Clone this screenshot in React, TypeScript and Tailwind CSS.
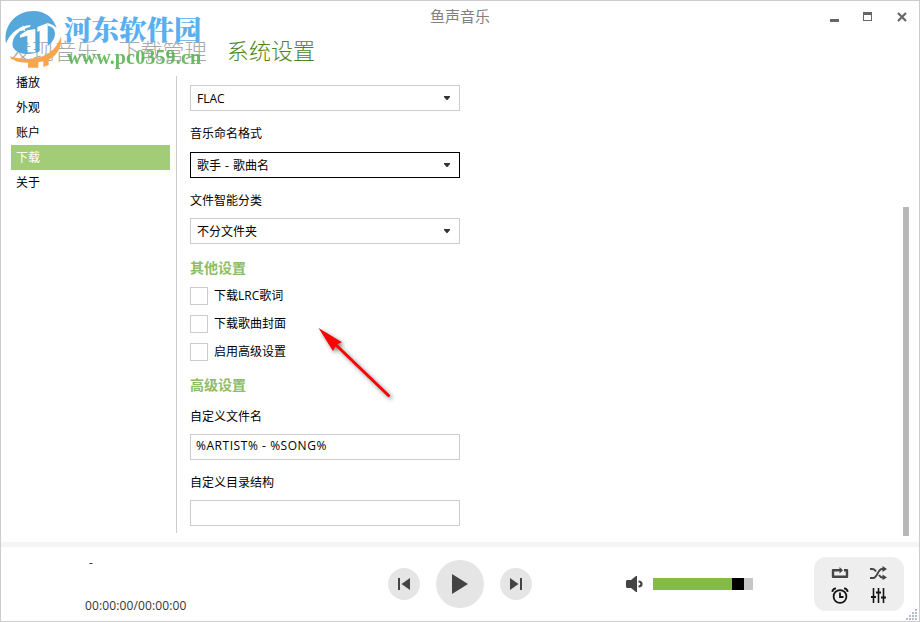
import React, { useState } from "react";

const TABS = ["发现音乐", "下载管理", "系统设置"];
const SECTIONS = ["播放", "外观", "账户", "下载", "关于"];

function SelectBox({ value, active }: { value: string; active?: boolean }) {
  return (
    <button
      className={`flex h-[26px] w-[270px] shrink-0 items-center justify-between border pl-1.5 pr-2 text-left ${
        active ? "border-black" : "border-[#cccccc]"
      }`}
    >
      <span className="pt-px leading-6 [word-spacing:1px]">{value}</span>
      <svg width="8" height="5" viewBox="0 0 8 5" fill="#333">
        <path d="M1 0h6v1L4.500 4h-1L1 1z" />
      </svg>
    </button>
  );
}

function FieldLabel({ children }: { children: React.ReactNode }) {
  return <div className="flex h-10 shrink-0 items-center pt-1.5">{children}</div>;
}

function CheckRow({ label }: { label: string }) {
  const [on, setOn] = useState(false);
  return (
    <label className="flex h-7 items-center gap-1.5">
      <input
        type="checkbox"
        checked={on}
        onChange={(e) => setOn(e.target.checked)}
        className="h-[18px] w-[18px] appearance-none border border-[#cccccc] checked:bg-[#83bb45]"
      />
      <span>{label}</span>
    </label>
  );
}

function WindowButtons() {
  return (
    <div className="flex items-center text-[#666]">
      <svg width="80" height="12" viewBox="0 0 80 12" fill="currentColor">
        <path d="M0 8h9v3H0z" />
        <path d="M33 1h9v9h-9zM34 4v5h7V4z" fillRule="evenodd" />
        <path d="M68 2l8 8M76 2l-8 8" stroke="currentColor" strokeWidth="2.2" />
      </svg>
    </div>
  );
}

function SiteMark() {
  return (
    <div className="pointer-events-none absolute left-[3px] top-2 h-[60px] w-[200px]">
      <svg className="absolute left-0 top-0" width="60" height="60" viewBox="12 12 180 180">
        {/* swooshes, towers and star are cut out of the disc */}
        <mask id="disc-cut" maskUnits="userSpaceOnUse" x="0" y="0" width="200" height="200">
          <path d="M0 0h200v200H0z" fill="#fff" />
          <g fill="#000">
            <path d="M16 122C26 84 60 62 92 60L90 66C56 74 34 96 38 124Q42 138 60 143L40 156Q18 144 16 122Z" />
            <path d="M143 62Q166 66 165 88C164 112 138 130 118 137L120 148C154 138 178 112 176 74Q160 58 143 54Z" />
            <path d="M60 90L82 76L106 72V142H82V92L60 98Z" />
            <path d="M112 66L143 54V130L119 140V78L112 80Z" />
            <path d="M69 61l3 6 7 .5-5 4.500 1.500 7-6.500-3.500-6.500 3.500 1.500-7-5-4.500 7-.5z" />
          </g>
        </mask>
        <path
          d="M18 116C8 62 48 18 100 18C138 18 162 40 172 75C168 106 140 138 105 144C75 150 48 146 40 130Z"
          fill="#56a8da"
          mask="url(#disc-cut)"
        />
        <path
          d="M183 94C188 130 166 156 146 164V180L130 186V169L115 172V188H84V173C58 174 38 167 29 154C72 166 112 164 140 148C162 136 176 116 183 94Z"
          fill="#f7a64d"
        />
      </svg>
      <div className="absolute left-[60px] top-0 whitespace-nowrap font-['Noto_Serif_CJK_SC','Noto_Sans_CJK_SC',serif] text-[27.500px] font-black leading-[38px] text-[#5aaef2]">
        河东软件园
      </div>
      <div className="absolute left-[63px] top-9 whitespace-nowrap font-['Liberation_Serif',serif] text-[20px] font-bold leading-6 tracking-[0.15px] text-[#5bb554] opacity-90">
        www.pc0359.cn
      </div>
    </div>
  );
}

function Arrow() {
  return (
    <svg
      className="pointer-events-none absolute left-[309px] top-[319px] drop-shadow-[2px_2px_2px_rgba(0,0,0,0.5)]"
      width="90"
      height="85"
      viewBox="310 320 90 85"
    >
      <path d="M336 345L388.500 395.500" stroke="#fe0000" strokeWidth="3" strokeLinecap="round" />
      <path d="M318.500 328L342 342.300L336.500 344.500L333 351Z" fill="#fe0000" />
    </svg>
  );
}

function Transport() {
  return (
    <div className="flex items-center gap-4 text-[#444]">
      <button className="flex size-8 items-center justify-center rounded-full bg-[#e5e5e5]">
        <svg width="12" height="12" viewBox="0 0 12 12" fill="currentColor">
          <path d="M0 0h2v12H0zM12 0v12L3.500 6z" />
        </svg>
      </button>
      <button className="flex size-12 items-center justify-center rounded-full bg-[#e5e5e5]">
        <svg width="16" height="20" viewBox="0 0 16 20" fill="currentColor">
          <path d="M0 0l16 10L0 20z" />
        </svg>
      </button>
      <button className="flex size-8 items-center justify-center rounded-full bg-[#e5e5e5]">
        <svg width="12" height="12" viewBox="0 0 12 12" fill="currentColor">
          <path d="M10 0h2v12h-2zM0 0l8.500 6L0 12z" />
        </svg>
      </button>
    </div>
  );
}

function Volume({ level }: { level: number }) {
  return (
    <div className="flex items-center gap-2.5">
      <svg width="17" height="16" viewBox="0 0 17 16">
        <path d="M1 4h4l5-4h1v16h-1l-5-4H1L0 11V5z" fill="#444" />
        <path d="M12.500 5.500Q15.500 5.500 15.500 8t-3 2.500" fill="none" stroke="#444" strokeWidth="2.200" />
      </svg>
      <div className="flex h-3 w-[100px] bg-[#c6c6c6]">
        <div className="bg-[#83bb45]" style={{ width: level }} />
        <div className="w-3 bg-black" />
      </div>
    </div>
  );
}

function ModePanel() {
  return (
    <div className="grid h-[54px] w-[90px] grid-cols-[39px_39px] grid-rows-[23px_23px] place-content-center place-items-center rounded-xl bg-[#eeeeee] text-[#444]">
      {/* repeat */}
      <svg width="18" height="12" viewBox="0 0 18 12" fill="none" stroke="currentColor" strokeWidth="2.400">
        <path d="M5.500 3.200H2V9.800h14V3.200h-3" strokeLinejoin="round" />
        <path d="M5 3.200h5" />
        <path d="M8.500 0l3.500 3.200-3.500 3.200z" fill="currentColor" stroke="none" />
      </svg>
      {/* shuffle */}
      <svg width="17" height="14" viewBox="0 0 17 14" fill="none" stroke="currentColor" strokeWidth="1.900">
        <path d="M0 12h3.500C7 12 8 3 12 3h3M0 3h2.500q2 0 3.500 2.500M9 9q1.500 2.500 3.500 2.500H15" />
        <path d="M12.500 0l4.500 3-4.500 3zM12.500 8.500l4.500 3-4.500 2.500z" fill="currentColor" stroke="none" />
      </svg>
      {/* sleep timer */}
      <svg width="18" height="17" viewBox="0 0 18 17" fill="none" stroke="#151515" strokeWidth="1.800">
        <circle cx="9" cy="9.500" r="6.400" />
        <path d="M9 5.500V10h3.500M1.300 4.800Q1.600 1.500 5 1.300M13 1.300Q16.400 1.500 16.700 4.800" />
      </svg>
      {/* equalizer */}
      <svg width="15" height="15" viewBox="0 0 15 15" fill="none" stroke="#151515" strokeWidth="1.600">
        <path d="M2.500 0v15M7.500 0v15M12.500 0v15" />
        <path d="M0 9h5M5 4.500h5M10 9.500h5" strokeWidth="2" />
      </svg>
    </div>
  );
}

export default function App() {
  const [section, setSection] = useState("下载");

  return (
    <div className="relative flex h-[622px] w-[920px] flex-col overflow-hidden border border-[#cccccc] bg-white font-['Open_Sans','Noto_Sans_CJK_SC',sans-serif] text-[12px] leading-4 text-black">
      <header className="grid h-[31px] shrink-0 grid-cols-[1fr_auto_1fr] items-center">
        <span />
        <h1 className="pb-0.5 text-[15px] leading-5 text-[#808080]">鱼声音乐</h1>
        <div className="flex justify-end pr-[9px]">
          <WindowButtons />
        </div>
      </header>

      <nav className="flex h-[37px] shrink-0 items-center gap-5 pb-0.5 pl-[9px] text-[22px] font-light leading-8 tracking-[0.1px]">
        {TABS.map((t) => (
          <span key={t} className={t === "系统设置" ? "text-[#4e8419]" : "text-[#a8a8a8]"}>
            {t}
          </span>
        ))}
      </nav>

      <main className="flex h-[473px] shrink-0">
        <aside className="w-[169px] pl-2.5 pt-px">
          {SECTIONS.map((s) => (
            <button
              key={s}
              onClick={() => setSection(s)}
              className={`flex h-[25px] w-full items-center pl-[5px] pt-px ${
                s === section ? "bg-[#a2cc76] text-white" : ""
              }`}
            >
              {s}
            </button>
          ))}
        </aside>
        <div className="ml-1.5 mt-[7px] h-[457px] w-px bg-[#cccccc]" />

        <section className="ml-[13px] flex flex-1 flex-col pt-4">
          <SelectBox value="FLAC" />
          <FieldLabel>音乐命名格式</FieldLabel>
          <div className="pt-px">
            <SelectBox value="歌手 - 歌曲名" active />
          </div>
          <FieldLabel>文件智能分类</FieldLabel>
          <SelectBox value="不分文件夹" />

          <h2 className="flex h-[38px] items-center pt-2.5 text-[14px] font-bold text-[#8dbd68]">其他设置</h2>
          <CheckRow label="下载LRC歌词" />
          <CheckRow label="下载歌曲封面" />
          <CheckRow label="启用高级设置" />

          <h2 className="flex h-[34px] items-center pt-1 text-[14px] font-bold text-[#8dbd68]">高级设置</h2>
          <div className="flex h-[34px] items-center">自定义文件名</div>
          <input
            className="h-[26px] w-[270px] shrink-0 border border-[#cccccc] pb-[3px] pl-[5px] tracking-[0.55px] outline-none"
            defaultValue="%ARTIST% - %SONG%"
          />
          <FieldLabel>自定义目录结构</FieldLabel>
          <input className="h-[26px] w-[270px] shrink-0 border border-[#cccccc] pl-[5px] outline-none" />
        </section>

        <div className="mr-2.5 mt-[138px] h-[329px] w-1.5 bg-[#b8b8b8]" />
      </main>

      <footer className="grid flex-1 grid-cols-[387px_144px_1fr] items-center border-t-[5px] border-[#f5f5f5]">
        <div className="flex h-full flex-col justify-between pb-[7px] pl-[84px] pt-2 text-[#333]">
          <span className="pl-1">-</span>
          <span className="tracking-[0.12px]">00:00:00/00:00:00</span>
        </div>
        <Transport />
        <div className="flex items-center justify-between pl-[94px] pr-[15px]">
          <Volume level={79} />
          <ModePanel />
        </div>
      </footer>

      <svg className="absolute bottom-0 right-0" width="13" height="12" viewBox="0 0 13 12" fill="#b3bccd">
        <path d="M9 0h2v2H9zM6 3h2v2H6zM9 3h2v2H9zM3 6h2v2H3zM6 6h2v2H6zM9 6h2v2H9zM0 9h2v2H0zM3 9h2v2H3zM6 9h2v2H6zM9 9h2v2H9z" />
      </svg>

      <SiteMark />
      <Arrow />
    </div>
  );
}
